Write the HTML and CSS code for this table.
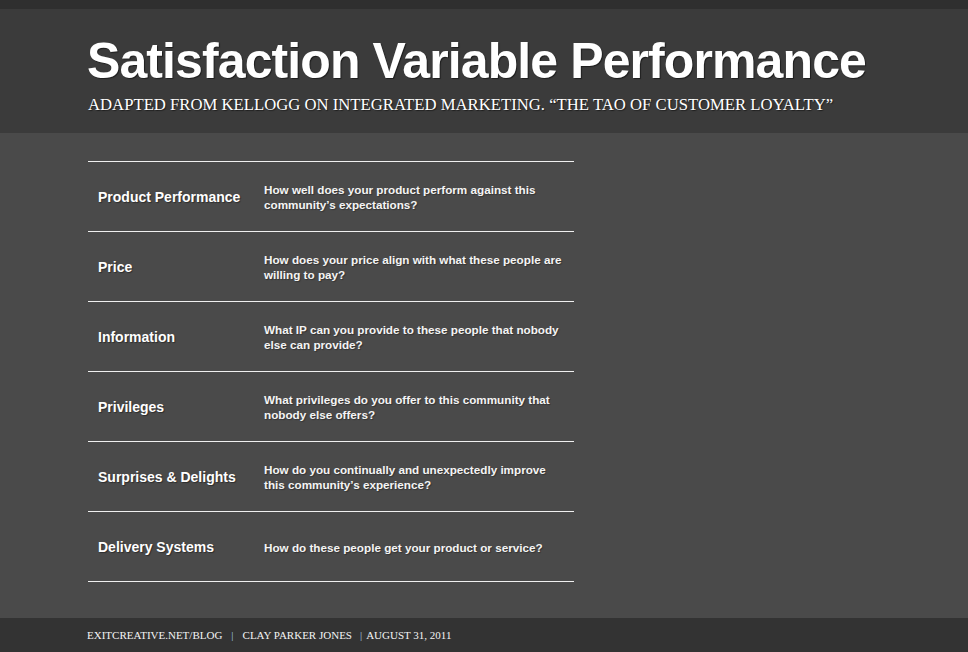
FILE: index.html
```html
<!DOCTYPE html>
<html>
<head>
<meta charset="utf-8">
<link rel="stylesheet" href="styles.css">
</head>
<body>
<div class="topstrip"></div>
<header class="header">
  <h1 class="title">Satisfaction Variable Performance</h1>
  <p class="subtitle">ADAPTED FROM KELLOGG ON INTEGRATED MARKETING. “THE TAO OF CUSTOMER LOYALTY”</p>
</header>
<main class="main">
  <div class="table">
    <div class="row"><div class="label">Product Performance</div><div class="desc">How well does your product perform against this community’s expectations?</div></div>
    <div class="row"><div class="label">Price</div><div class="desc">How does your price align with what these people are willing to pay?</div></div>
    <div class="row"><div class="label">Information</div><div class="desc">What IP can you provide to these people that nobody else can provide?</div></div>
    <div class="row"><div class="label">Privileges</div><div class="desc">What privileges do you offer to this community that nobody else offers?</div></div>
    <div class="row"><div class="label">Surprises &amp; Delights</div><div class="desc">How do you continually and unexpectedly improve this community’s experience?</div></div>
    <div class="row"><div class="label">Delivery Systems</div><div class="desc">How do these people get your product or service?</div></div>
  </div>
</main>
<footer class="footer">
  <span>EXITCREATIVE.NET/BLOG</span><span class="sep">|</span><span>CLAY PARKER JONES</span><span class="sep sep2">|</span><span>AUGUST 31, 2011</span>
</footer>
</body>
</html>
```
FILE: styles.css
```css
html, body {
  margin: 0;
  padding: 0;
}
body {
  width: 968px;
  height: 652px;
  background: #4a4a4a;
  display: flex;
  flex-direction: column;
  font-family: "Liberation Sans", Arial, sans-serif;
  color: #fff;
  overflow: hidden;
}
.topstrip {
  height: 9px;
  background: #2f2f2f;
}
.header {
  height: 124px;
  background: #3b3b3b;
  padding-left: 87px;
  box-sizing: border-box;
}
.title {
  margin: 0;
  padding-top: 26px;
  font-size: 50px;
  line-height: 52px;
  font-weight: bold;
  letter-spacing: -0.9px;
  text-shadow: 1px 1px 1px rgba(0,0,0,0.5);
}
.subtitle {
  margin: 8px 0 0 1px;
  font-family: "Liberation Serif", "Times New Roman", serif;
  font-size: 16.7px;
  line-height: 19px;
  text-shadow: 1px 1px 1px rgba(0,0,0,0.5);
}
.main {
  flex: 1;
  padding: 28px 0 0 88px;
}
.table {
  width: 486px;
  border-top: 1px solid #f0f0f0;
}
.row {
  height: 69px;
  border-bottom: 1px solid #f0f0f0;
  display: flex;
  align-items: center;
}
.label {
  width: 166px;
  padding-left: 10px;
  font-size: 14px;
  font-weight: bold;
  text-shadow: 1px 1px 1px rgba(0,0,0,0.4);
}
.desc {
  width: 300px;
  padding-top: 1px;
  font-size: 11.7px;
  line-height: 15px;
  font-weight: bold;
  color: #f4f4f4;
  text-shadow: 1px 1px 1px rgba(0,0,0,0.3);
}
.footer {
  height: 34px;
  background: #333;
  padding-left: 87px;
  display: flex;
  align-items: center;
  font-family: "Liberation Serif", "Times New Roman", serif;
  font-size: 11px;
  color: #f4f4f4;
}
.sep {
  color: #a8c8e0;
  margin: 0 9px 0 9px;
}
.sep2 {
  margin: 0 4px 0 8px;
}
```
